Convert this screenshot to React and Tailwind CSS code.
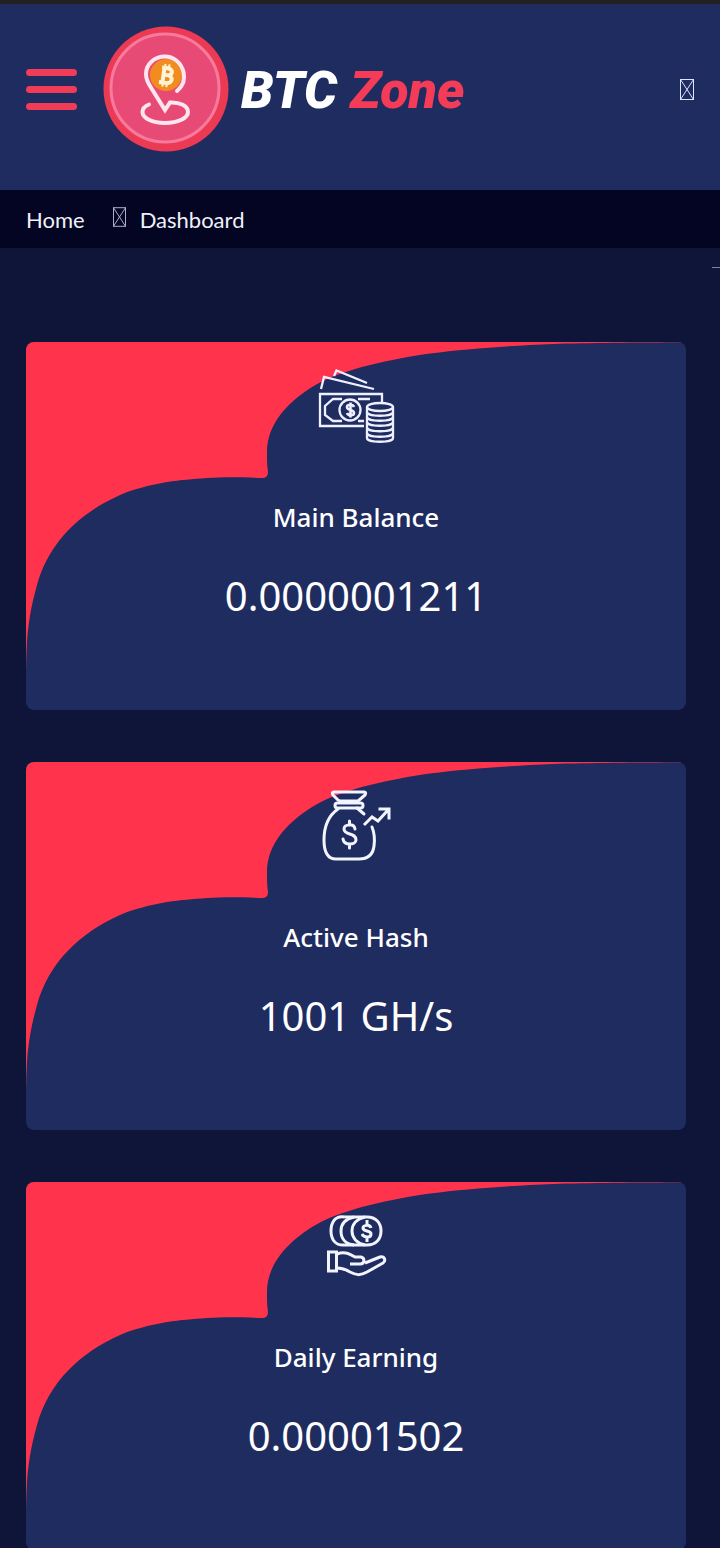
import React, { useState } from 'react';

const MissingGlyph = ({ className }) => (
  <svg viewBox="0 0 14 21" className={className} fill="none" stroke="currentColor" aria-hidden="true">
    <rect x="0.5" y="0.5" width="13" height="20" />
    <path d="M0.5 0.5L13.5 20.5M13.5 0.5L0.5 20.5" />
  </svg>
);

const LogoMark = () => (
  <svg viewBox="0 0 126 126" className="size-[126px]" fill="none" aria-hidden="true">
    <circle cx="63" cy="63" r="62.5" fill="#ec3a55" />
    <circle cx="62" cy="62" r="54" fill="#e84a76" stroke="#f77a9d" strokeWidth="3" />
    <circle cx="63" cy="49" r="16" fill="#f28c1e" />
    <path
      d="M74 65C81 59 82 52 80.500 46C78 36 70 30.500 62 30.500C51 30.500 43 38.500 43 48C43 52 44.500 56 47 60L62 84L67 76.500C77 76 85 80 85 86C85 92 75 97 62 97C49 97 39.500 92 39.500 86C39.500 83 42 80 46 78.500"
      stroke="#ffe6ee"
      strokeWidth="4"
      strokeLinecap="round"
      strokeLinejoin="miter"
    />
    <g transform="rotate(8 63 49)" stroke="#fff3d6" strokeWidth="4">
      <path d="M58 42H64C70 42 70 49 64 49H60M64 49C71 49 71 57 64 57H57M60.500 42V57" />
      <path d="M61 38V42M65 38V42M61 57V61M65 57V61" strokeWidth="2" />
    </g>
  </svg>
);

const MoneyIcon = () => (
  <svg viewBox="0 0 80 80" className="size-20" fill="none" stroke="#eef0ff" strokeWidth="2.3" aria-hidden="true">
    <path d="M18 10L20.500 4.500L51 17M5 23L8 11L58 23" />
    <path d="M48 60H4V28H66V36" />
    <path d="M26 33H17L9 40V49L17 55H26M42 33H54M42 55H48" />
    <circle cx="34" cy="44" r="10.500" />
    <path d="M38 41C37 38 31 38 31 41C31 45 38 43 38 47C38 50 32 50 31 47M34.500 36.500V51.500" strokeWidth="2.6" />
    <ellipse cx="64" cy="41" rx="13" ry="4" />
    <path d="M51 41V72C51 77 77 77 77 72V41" />
    <path
      d="M51 46C51 51 77 51 77 46M51 51C51 56 77 56 77 51M51 56C51 61 77 61 77 56M51 61.500C51 66.500 77 66.500 77 61.500M51 67C51 72 77 72 77 67"
      strokeWidth="2.3"
    />
  </svg>
);

const MoneyBagIcon = () => (
  <svg
    viewBox="0 -2 80 80"
    className="size-20"
    fill="none"
    stroke="#f2f4ff"
    strokeWidth="3"
    strokeLinecap="round"
    strokeLinejoin="round"
    aria-hidden="true"
  >
    <path d="M22 12L17 7C16 5 16 4 18 4H48C50 4 50 5 49 7L42 13H24Z" />
    <rect x="19" y="15" width="28" height="5" rx="2.500" />
    <path d="M22 21C12 28 8 40 8 52C8 65 12 71 20 71H43C52 71 57 66 58 58C59 51 58 44 56 39M41 20L48 26" />
    <path d="M39 41C38 35 28 36 28 41C28 48 40 44 40 52C40 57 28 58 27 51M33.500 33V37M33.500 56V60" />
    <path d="M49 36L56 29L62 33L72 22M64 21H73V30" strokeLinecap="square" strokeLinejoin="miter" />
  </svg>
);

const HandCoinsIcon = () => (
  <svg viewBox="0 -1 80 80" className="size-20" fill="none" stroke="#f2f4ff" strokeWidth="3" aria-hidden="true">
    <path d="M29 10C18 8 15 17 15 24C15 32 19 39 29 38" />
    <path d="M29 10H51C60 10 65 16 65 24C65 32 60 38 51 38H29" />
    <path d="M38 10C29 12 25 17 25 24C25 31 29 37 38 38" />
    <path d="M49 10C40 12 36 18 36 24C36 30 40 36 49 38" />
    <path d="M55 21C54 17 47 18 47 21C47 25 55 23 55 27C55 31 48 31 46 27M51 13V18M51 30V35" />
    <path d="M12.500 45H20.500V64H12.500Z" />
    <path
      d="M21 47C29 44 34 47 39 50H45C49 51 49 57 44 57H34M49 56L64 50C69 49 70 54 67 56L51 65C44 69 40 68 34 65C29 62 26 61 21 61"
      strokeLinejoin="round"
    />
  </svg>
);

const stats = [
  { title: 'Main Balance', value: '0.0000001211', Icon: MoneyIcon },
  { title: 'Active Hash', value: '1001 GH/s', Icon: MoneyBagIcon },
  { title: 'Daily Earning', value: '0.00001502', Icon: HandCoinsIcon },
];

const StatCard = ({ title, value, Icon }) => (
  <article className="relative overflow-hidden rounded-lg bg-[#1f2c60] pt-6 pb-[84px] text-center text-white">
    {/* Red wave behind the content */}
    <svg
      viewBox="0 0 660 368"
      preserveAspectRatio="none"
      className="absolute inset-0 h-full w-full"
      aria-hidden="true"
    >
      <path
        fill="#ff344c"
        d="M0 0H660V0.300C610 0.500 560 1 527 2C480 4 440 7 404 11.500C365 17 320 27 294 40.500C262 58 241 82 241 110C241 118 241 124 242 130Q242 136 236 136C215 135 195 135 181 136C166 137 155 138 141 140C124 143 108 147 94 153C54 171 23 200 11 243C4 268 2 285 1 300C0.500 310 0 320 0 330Z"
      />
    </svg>
    <div className="relative flex flex-col items-center">
      <Icon />
      <h2 className="mt-[52px] text-[26px] leading-[38px] font-medium">{title}</h2>
      <p className="mt-[30px] text-[40px] leading-[60px]">{value}</p>
    </div>
  </article>
);

const App = () => {
  const [menuOpen, setMenuOpen] = useState(false);

  return (
    <div className="min-h-screen bg-[#0e1539] font-['Noto_Sans',sans-serif]">
      <header className="flex items-center border-t-4 border-[#212121] bg-[#1f2c60] px-[26px] pt-[22px] pb-[38px]">
        <button
          type="button"
          aria-label="Menu"
          aria-expanded={menuOpen}
          onClick={() => setMenuOpen(!menuOpen)}
          className="flex w-[51px] flex-col gap-[10px]"
        >
          <span className="h-[7px] rounded-full bg-[#f03c57]" />
          <span className="h-[7px] rounded-full bg-[#f03c57]" />
          <span className="h-[7px] rounded-full bg-[#f03c57]" />
        </button>
        <a href="#" className="ml-[26px] flex items-center gap-3">
          <LogoMark />
          <span className="pt-1 font-['Roboto',sans-serif] text-[52px] leading-none font-black text-[#f43b58] italic">
            <span className="text-white">BTC</span> Zone
          </span>
        </a>
        <button type="button" aria-label="Account" className="ml-auto text-[#dfe3ff]">
          <MissingGlyph className="h-[21px] w-[14px]" />
        </button>
      </header>

      <nav className="flex h-[58px] items-center bg-[#030522] px-[26px] font-['Lato',sans-serif] text-[22px] text-[#f0f1fa]">
        <a href="#">Home</a>
        <MissingGlyph className="mr-[14px] mb-1 ml-7 h-5 w-[13px] text-[#b9bbd6]" />
        <a href="#">Dashboard</a>
      </nav>

      <main>
        <div className="flex h-[94px] justify-end pt-[19px]">
          <span className="h-px w-2 bg-[#7d82a3]" />
        </div>
        <div className="flex flex-col gap-[52px] pr-[34px] pl-[26px]">
          {stats.map((stat) => (
            <StatCard key={stat.title} {...stat} />
          ))}
        </div>
      </main>
    </div>
  );
};

export default App;
